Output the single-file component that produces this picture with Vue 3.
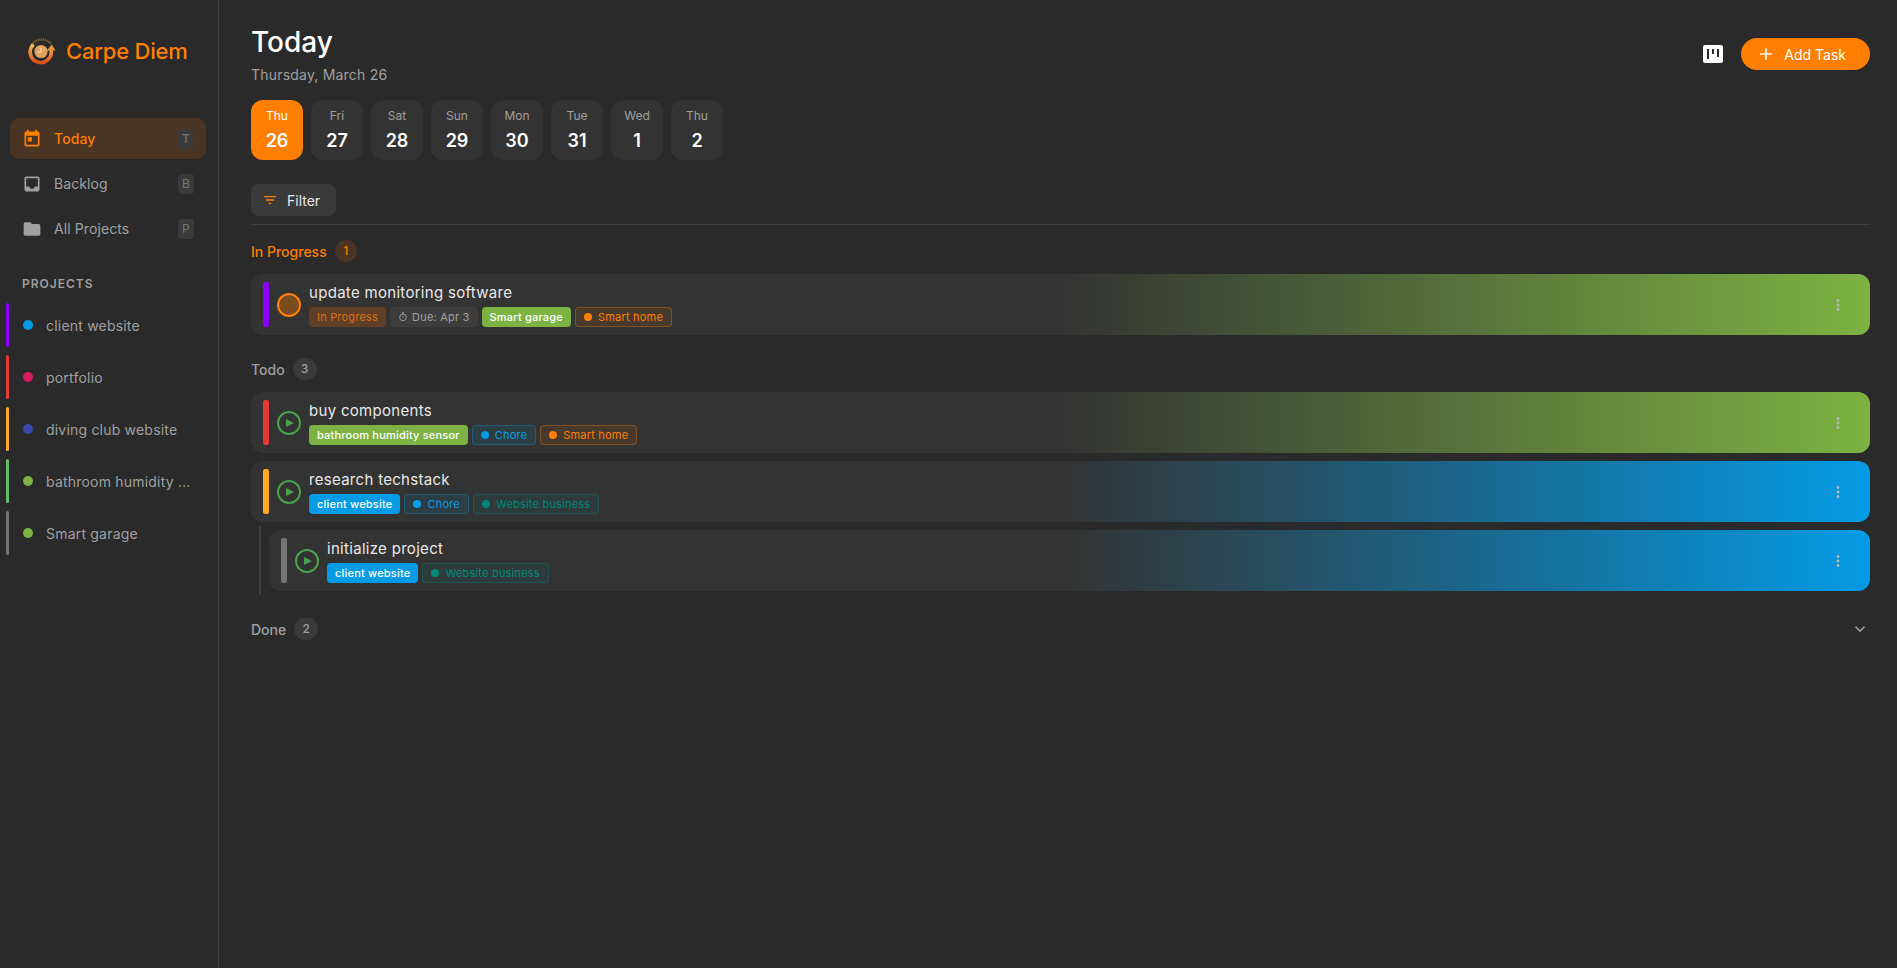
<script setup>
const navItems = [
  { label: 'Today', key: 'T', active: true, icon: 'M19 3h-1V1h-2v2H8V1H6v2H5c-1.11 0-1.99.9-1.99 2L3 19c0 1.1.89 2 2 2h14c1.1 0 2-.9 2-2V5c0-1.1-.9-2-2-2zm0 16H5V8h14v11zM7 10h5v5H7z' },
  { label: 'Backlog', key: 'B', icon: 'M19 3H4.99c-1.11 0-1.98.89-1.98 2L3 19c0 1.1.88 2 1.99 2H19c1.1 0 2-.9 2-2V5c0-1.11-.9-2-2-2zm0 12h-4c0 1.66-1.35 3-3 3s-3-1.34-3-3H4.99V5H19v10z' },
  { label: 'All Projects', key: 'P', icon: 'M10 4H4c-1.1 0-1.99.9-1.99 2L2 18c0 1.1.9 2 2 2h16c1.1 0 2-.9 2-2V8c0-1.1-.9-2-2-2h-8l-2-2z' },
]

const projects = [
  { name: 'client website', bar: '#8b00ff', dot: '#039be5' },
  { name: 'portfolio', bar: '#e53935', dot: '#d81b60' },
  { name: 'diving club website', bar: '#ffa726', dot: '#3949ab' },
  { name: 'bathroom humidity sensor', bar: '#66bb6a', dot: '#7cb342' },
  { name: 'Smart garage', bar: '#757575', dot: '#7cb342' },
]

const days = [
  ['Thu', 26], ['Fri', 27], ['Sat', 28], ['Sun', 29],
  ['Mon', 30], ['Tue', 31], ['Wed', 1], ['Thu', 2],
]

const GREEN = '#7cb342'
const BLUE = '#039be5'
const ORANGE = '#ff7f00'
const TEAL = '#00897b'

const inProgress = [
  {
    title: 'update monitoring software', bar: '#8b00ff', color: GREEN, running: true,
    due: 'Due: Apr 3', status: 'In Progress', project: 'Smart garage',
    tags: [['Smart home', ORANGE]],
  },
]

const todo = [
  {
    title: 'buy components', bar: '#e53935', color: GREEN,
    project: 'bathroom humidity sensor', tags: [['Chore', BLUE], ['Smart home', ORANGE]],
  },
  {
    title: 'research techstack', bar: '#ffa726', color: BLUE,
    project: 'client website', tags: [['Chore', BLUE], ['Website business', TEAL]],
    children: [
      {
        title: 'initialize project', bar: '#757575', color: BLUE,
        project: 'client website', tags: [['Website business', TEAL]],
      },
    ],
  },
]

function flatten(list) {
  return list.flatMap(t => [t, ...(t.children || []).map(c => ({ ...c, child: true }))])
}

function cardStyle(task) {
  return { background: `linear-gradient(to right, #333333 50%, ${task.color} 100%)` }
}

function tagStyle(color) {
  return { color, borderColor: color + '55', background: color + '1a' }
}
</script>

<template>
  <div class="app">
    <aside class="sidebar">
      <div class="brand">
        <svg class="logo" viewBox="0 0 28 28" width="28" height="28">
          <defs>
            <linearGradient id="ring" x1="0" y1="0" x2="0" y2="1">
              <stop offset="0" stop-color="#f4c04f" />
              <stop offset="1" stop-color="#d9501e" />
            </linearGradient>
          </defs>
          <path d="M3 9A12 12 0 0 1 23 7" fill="none" stroke="#8a6a3a" stroke-width="2.4" stroke-dasharray="1 0.8" />
          <path d="M5.5 7.5A10.5 10.5 0 1 0 23 13" fill="none" stroke="url(#ring)" stroke-width="3.6" />
          <path d="M23.6 7.5L19 13.5h8.6z" fill="#e8913a" />
          <circle cx="13" cy="14.5" r="6.6" fill="#e0a45c" />
          <path d="M13 10.5v4.5H9.5" fill="none" stroke="#fff3dc" stroke-width="0.9" />
        </svg>
        <span class="brand-name">Carpe Diem</span>
      </div>

      <nav class="nav">
        <a v-for="item in navItems" :key="item.label" class="nav-item" :class="{ active: item.active }">
          <svg class="nav-icon" viewBox="0 0 24 24" width="20" height="20"><path :d="item.icon" fill="currentColor" /></svg>
          <span class="nav-label">{{ item.label }}</span>
          <kbd class="key">{{ item.key }}</kbd>
        </a>
      </nav>

      <div class="projects-title">PROJECTS</div>
      <div class="project-list">
        <div v-for="p in projects" :key="p.name" class="project">
          <span class="project-bar" :style="{ background: p.bar }"></span>
          <span class="project-dot" :style="{ background: p.dot }"></span>
          <span class="project-name">{{ p.name }}</span>
        </div>
      </div>
    </aside>

    <main class="main">
      <header class="header">
        <div>
          <h1 class="title">Today</h1>
          <div class="subtitle">Thursday, March 26</div>
        </div>
        <div class="actions">
          <svg viewBox="0 0 24 24" width="24" height="24">
            <path fill="#fff" fill-rule="evenodd" d="M20 3H4C2.9 3 2 3.9 2 5v14c0 1.1.9 2 2 2h16c1.1 0 2-.9 2-2V5c0-1.1-.9-2-2-2zM8 17H6V7h2v10zm5-5h-2V7h2v5zm5 3h-2V7h2v8z" />
          </svg>
          <button class="add-btn">
            <svg viewBox="0 0 24 24" width="20" height="20"><path fill="currentColor" d="M19 13h-6v6h-2v-6H5v-2h6V5h2v6h6v2z" /></svg>
            Add Task
          </button>
        </div>
      </header>

      <div class="days">
        <div v-for="(d, i) in days" :key="i" class="day" :class="{ current: i === 0 }">
          <span class="day-name">{{ d[0] }}</span>
          <span class="day-num">{{ d[1] }}</span>
        </div>
      </div>

      <div class="toolbar">
        <button class="filter-btn">
          <svg viewBox="0 0 24 24" width="16" height="16"><path fill="#ff7f00" d="M10 18h4v-2h-4v2zM3 6v2h18V6H3zm3 7h12v-2H6v2z" /></svg>
          Filter
        </button>
      </div>

      <section class="section">
        <div class="section-head in-progress">
          <span>In Progress</span><span class="count">1</span>
        </div>
        <div v-for="t in inProgress" :key="t.title" class="card" :style="cardStyle(t)">
          <span class="card-bar" :style="{ background: t.bar }"></span>
          <span class="status-ring"></span>
          <div class="card-body">
            <div class="card-title">{{ t.title }}</div>
            <div class="chips">
              <span class="chip chip-status">{{ t.status }}</span>
              <span class="chip chip-due">
                <svg viewBox="0 0 24 24" width="10" height="10"><path fill="none" stroke="currentColor" stroke-width="2.4" d="M12 21a8 8 0 1 0 0-16 8 8 0 0 0 0 16zM12 9v4M9 2h6" /></svg>
                {{ t.due }}
              </span>
              <span class="chip chip-project" :style="{ background: t.color }">{{ t.project }}</span>
              <span v-for="tag in t.tags" :key="tag[0]" class="chip chip-tag" :style="tagStyle(tag[1])">
                <i class="tag-dot" :style="{ background: tag[1] }"></i>{{ tag[0] }}
              </span>
            </div>
          </div>
          <svg class="more" viewBox="0 0 24 24" width="18" height="18"><path fill="currentColor" d="M12 8c1.1 0 2-.9 2-2s-.9-2-2-2-2 .9-2 2 .9 2 2 2zm0 2c-1.1 0-2 .9-2 2s.9 2 2 2 2-.9 2-2-.9-2-2-2zm0 6c-1.1 0-2 .9-2 2s.9 2 2 2 2-.9 2-2-.9-2-2-2z" /></svg>
        </div>
      </section>

      <section class="section">
        <div class="section-head">
          <span>Todo</span><span class="count">3</span>
        </div>
        <div class="task-list">
          <div v-for="t in flatten(todo)" :key="t.title" :class="{ 'child-wrap': t.child }">
            <div class="card" :style="cardStyle(t)">
              <span class="card-bar" :style="{ background: t.bar }"></span>
              <span class="play">
                <svg viewBox="0 0 24 24" width="24" height="24">
                  <circle cx="12" cy="12" r="11" fill="none" stroke="#4caf50" stroke-width="2" />
                  <path d="M9 8l8 4-8 4z" fill="#4caf50" />
                </svg>
              </span>
              <div class="card-body">
                <div class="card-title">{{ t.title }}</div>
                <div class="chips">
                  <span class="chip chip-project" :style="{ background: t.color }">{{ t.project }}</span>
                  <span v-for="tag in t.tags" :key="tag[0]" class="chip chip-tag" :style="tagStyle(tag[1])">
                    <i class="tag-dot" :style="{ background: tag[1] }"></i>{{ tag[0] }}
                  </span>
                </div>
              </div>
              <svg class="more" viewBox="0 0 24 24" width="18" height="18"><path fill="currentColor" d="M12 8c1.1 0 2-.9 2-2s-.9-2-2-2-2 .9-2 2 .9 2 2 2zm0 2c-1.1 0-2 .9-2 2s.9 2 2 2 2-.9 2-2-.9-2-2-2zm0 6c-1.1 0-2 .9-2 2s.9 2 2 2 2-.9 2-2-.9-2-2-2z" /></svg>
            </div>
          </div>
        </div>
      </section>

      <section class="section">
        <div class="section-head">
          <span>Done</span><span class="count">2</span>
          <svg class="chevron" viewBox="0 0 24 24" width="20" height="20"><path fill="currentColor" d="M16.59 8.59 12 13.17 7.41 8.59 6 10l6 6 6-6z" /></svg>
        </div>
      </section>
    </main>
  </div>
</template>

<style>
html, body {
  margin: 0;
  background: #2a2a2a;
}
</style>

<style scoped>
.app {
  display: flex;
  min-height: 100vh;
  background: #2a2a2a;
  color: #fff;
  font-family: Inter, "Liberation Sans", sans-serif;
}

.sidebar {
  width: 218px;
  flex-shrink: 0;
  border-right: 1px solid #3d3d3d;
  box-sizing: content-box;
}

.brand {
  display: flex;
  align-items: center;
  gap: 10px;
  padding: 37px 0 0 28px;
  height: 28px;
}

.brand-name {
  color: #ff7f00;
  font-size: 22px;
  font-weight: 500;
  letter-spacing: -0.2px;
}

.nav {
  display: flex;
  flex-direction: column;
  gap: 4px;
  margin-top: 53px;
  padding: 0 12px 0 10px;
}

.nav-item {
  display: flex;
  align-items: center;
  height: 41px;
  padding: 0 12px 0 12px;
  border-radius: 10px;
  color: #a0a0a0;
  font-size: 14px;
  letter-spacing: 0.1px;
}

.nav-item.active {
  background: #4a3423;
  color: #ff7f00;
  font-weight: 500;
}

.nav-icon {
  flex-shrink: 0;
  margin-right: 12px;
}

.nav-label {
  flex: 1;
}

.key {
  width: 16px;
  height: 20px;
  line-height: 20px;
  border-radius: 4px;
  background: #3a3a3a;
  color: #777;
  font-family: inherit;
  font-size: 12px;
  text-align: center;
}

.projects-title {
  margin: 27px 0 0 22px;
  color: #a0a0a0;
  font-size: 12px;
  font-weight: 600;
  letter-spacing: 1px;
  line-height: 16px;
}

.project-list {
  display: flex;
  flex-direction: column;
  gap: 8px;
  margin-top: 11px;
  padding-left: 6px;
}

.project {
  display: flex;
  align-items: center;
  height: 44px;
}

.project-bar {
  width: 3px;
  height: 44px;
  border-radius: 2px;
  margin-right: 14px;
  flex-shrink: 0;
}

.project-dot {
  width: 10px;
  height: 10px;
  border-radius: 50%;
  margin-right: 13px;
  flex-shrink: 0;
}

.project-name {
  width: 146px;
  color: #a0a0a0;
  font-size: 14px;
  letter-spacing: 0.2px;
  white-space: nowrap;
  overflow: hidden;
  text-overflow: ellipsis;
}

.main {
  flex: 1;
  min-width: 0;
  padding: 24px 27px 0 32px;
}

.header {
  display: flex;
  justify-content: space-between;
  align-items: flex-start;
}

.title {
  margin: 0;
  font-size: 28px;
  font-weight: 500;
  line-height: 36px;
}

.subtitle {
  margin-top: 5px;
  color: #a0a0a0;
  font-size: 14px;
  line-height: 20px;
  letter-spacing: 0.2px;
}

.actions {
  display: flex;
  align-items: center;
  gap: 16px;
  margin-top: 14px;
}

.add-btn {
  display: flex;
  align-items: center;
  gap: 8px;
  height: 32px;
  padding: 0 24px 0 15px;
  border: 0;
  border-radius: 16px;
  background: #ff7f00;
  color: #fff;
  font-family: inherit;
  font-size: 14px;
}

.days {
  display: flex;
  gap: 8px;
  margin-top: 15px;
}

.day {
  width: 52px;
  height: 60px;
  display: flex;
  flex-direction: column;
  align-items: center;
  justify-content: center;
  gap: 6px;
  border-radius: 12px;
  background: #333;
}

.day.current {
  background: #ff7f00;
}

.day-name {
  color: #a0a0a0;
  font-size: 12px;
  line-height: 16px;
}

.day.current .day-name {
  color: #fff;
}

.day-num {
  font-size: 18px;
  font-weight: 600;
  line-height: 22px;
}

.toolbar {
  margin-top: 24px;
  padding-bottom: 8px;
  border-bottom: 1px solid #3d3d3d;
}

.filter-btn {
  display: flex;
  align-items: center;
  gap: 9px;
  height: 32px;
  padding: 0 16px 0 11px;
  border: 0;
  border-radius: 8px;
  background: #3a3a3a;
  color: #e8e8e8;
  font-family: inherit;
  font-size: 14px;
}

.section {
  margin-top: 15px;
  padding-bottom: 8px;
}

.section-head {
  display: flex;
  align-items: center;
  gap: 8px;
  height: 22px;
  margin-bottom: 12px;
  color: #a0a0a0;
  font-size: 14px;
  font-weight: 500;
}

.section-head.in-progress {
  color: #ff7f00;
}

.count {
  min-width: 24px;
  height: 22px;
  line-height: 22px;
  border-radius: 11px;
  background: #3a3a3a;
  font-size: 12px;
  text-align: center;
}

.in-progress .count {
  min-width: 22px;
  background: #4a3423;
}

.chevron {
  margin-left: auto;
}

.task-list {
  display: flex;
  flex-direction: column;
  gap: 8px;
}

.child-wrap {
  margin-top: -4px;
  margin-left: 8px;
  padding: 4px 0 4px 8px;
  border-left: 2px solid #3d3d3d;
}

.card {
  display: flex;
  align-items: center;
  height: 61px;
  padding: 0 23px 0 12px;
  border-radius: 12px;
  box-sizing: border-box;
}

.card-bar {
  width: 6px;
  height: 45px;
  border-radius: 2px;
  margin-right: 8px;
  flex-shrink: 0;
}

.status-ring {
  width: 24px;
  height: 24px;
  border-radius: 50%;
  border: 2px solid #ff7f00;
  background: rgba(255, 127, 0, 0.35);
  box-sizing: border-box;
  flex-shrink: 0;
}

.play {
  width: 24px;
  height: 24px;
  flex-shrink: 0;
  opacity: 0.9;
}

.card-body {
  flex: 1;
  min-width: 0;
  margin-left: 8px;
}

.card-title {
  color: #e8e8e8;
  font-size: 15px;
  font-weight: 400;
  line-height: 20px;
  letter-spacing: 0.3px;
}

.chips {
  display: flex;
  gap: 4px;
  margin-top: 4px;
}

.chip {
  display: inline-flex;
  align-items: center;
  height: 20px;
  padding: 0 8px;
  border-radius: 4px;
  box-sizing: border-box;
  font-size: 11px;
  letter-spacing: 0.2px;
  white-space: nowrap;
}

.chip-status {
  background: #5f4026;
  color: #d9701a;
}

.chip-due {
  gap: 4px;
  background: #3d3d3d;
  color: #a0a0a0;
}

.chip-project {
  color: #fff;
  font-weight: 500;
}

.chip-tag {
  border: 1px solid;
}

.tag-dot {
  width: 8px;
  height: 8px;
  border-radius: 50%;
  margin-right: 6px;
}

.more {
  color: #b5b5b5;
  flex-shrink: 0;
}
</style>
